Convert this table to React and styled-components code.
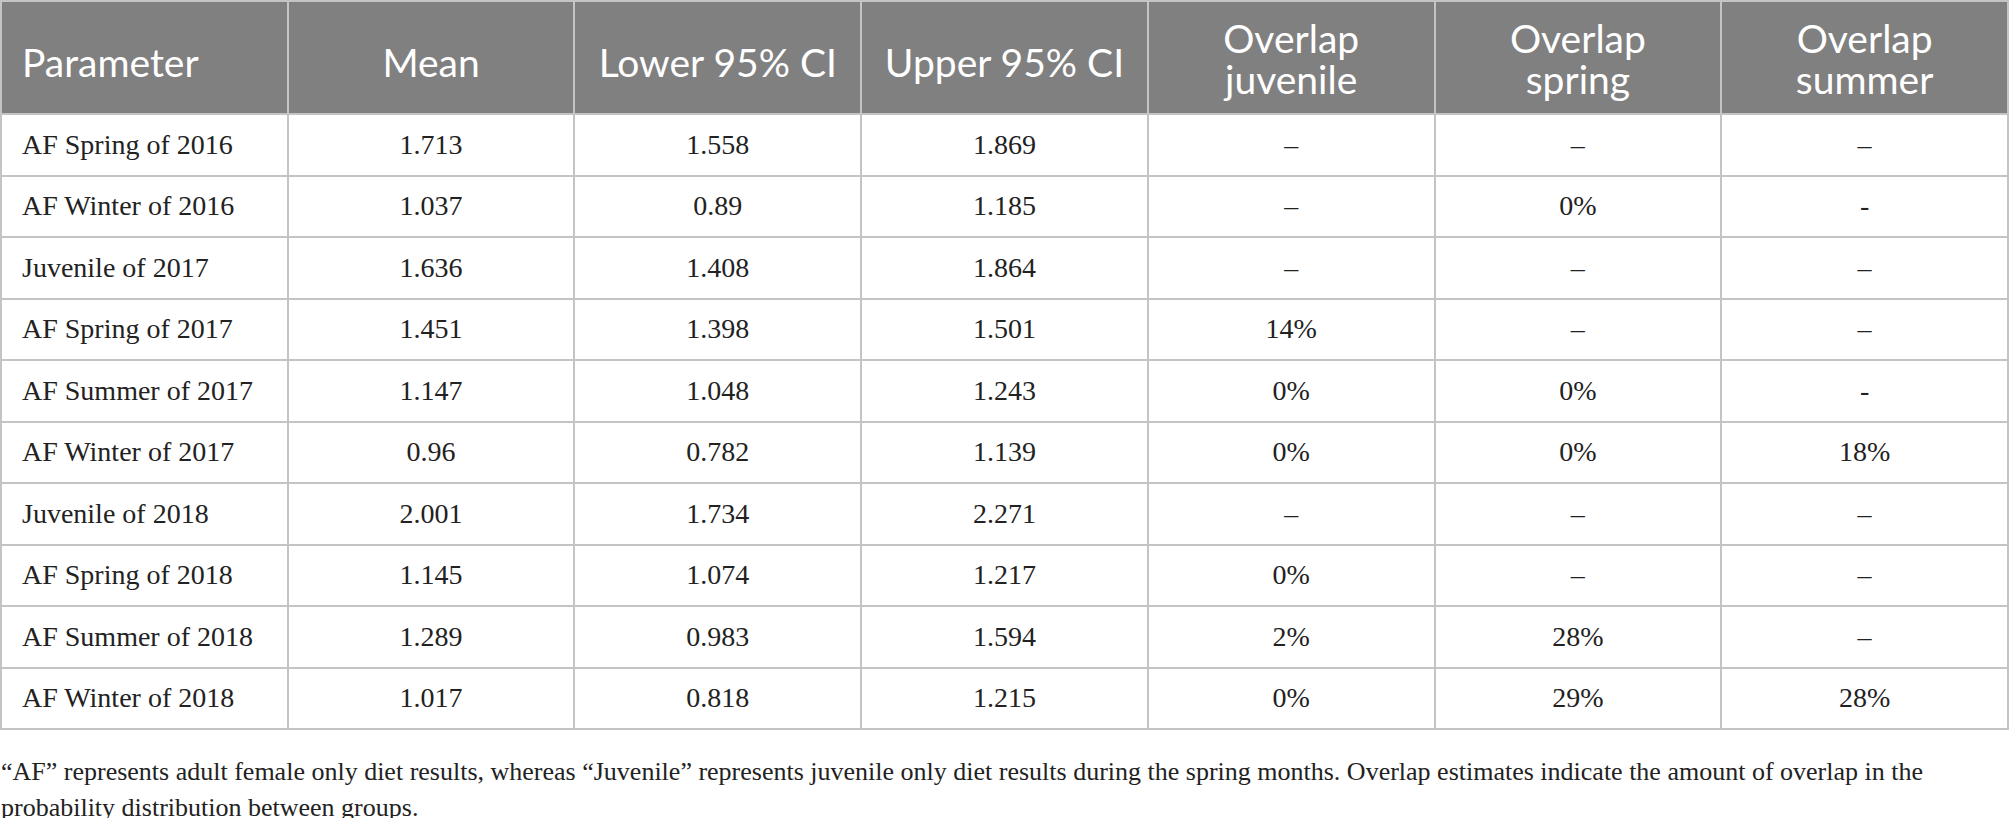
import React from "react";
import styled, { createGlobalStyle } from "styled-components";

const Global = createGlobalStyle`
  html, body { margin: 0; padding: 0; background: #ffffff; }
  body { font-family: "Liberation Serif", "Times New Roman", serif; }
`;

const Page = styled.div`
  width: 2009px;
`;

const Table = styled.table`
  width: 2009px;
  table-layout: fixed;
  border-collapse: separate;
  border-spacing: 0;
  border-top: 2px solid #c4c4c4;
  border-left: 2px solid #c4c4c4;
`;

const HeadCell = styled.th`
  box-sizing: border-box;
  height: 113px;
  background: #808080;
  color: #ffffff;
  font-family: Lato, "Open Sans", sans-serif;
  font-weight: 400;
  font-size: 39px;
  line-height: 41px;
  text-align: ${(p) => (p.$left ? "left" : "center")};
  padding-top: ${(p) => (p.$multi ? "2px" : "10px")};
  padding-bottom: 0;
  padding-right: 0;
  padding-left: ${(p) => (p.$left ? "20px" : "0")};
  border-right: 2px solid #c4c4c4;
  border-bottom: 2px solid #c4c4c4;
  vertical-align: middle;
`;

const Cell = styled.td`
  box-sizing: border-box;
  height: 61.5px;
  color: #222222;
  font-family: "Liberation Serif", "Times New Roman", serif;
  font-size: 28px;
  line-height: 32px;
  text-align: ${(p) => (p.$left ? "left" : "center")};
  padding: 0 0 0 ${(p) => (p.$left ? "20px" : "0")};
  border-right: 2px solid #c4c4c4;
  border-bottom: 2px solid #c4c4c4;
  vertical-align: middle;
`;

const Note = styled.p`
  margin: 24px 0 0 0;
  padding: 0 0 0 1px;
  color: #222222;
  font-family: "Liberation Serif", "Times New Roman", serif;
  font-size: 26px;
  line-height: 36px;
`;

const headers = [
  ["Parameter"],
  ["Mean"],
  ["Lower 95% CI"],
  ["Upper 95% CI"],
  ["Overlap", "juvenile"],
  ["Overlap", "spring"],
  ["Overlap", "summer"],
];

const rows = [
  ["AF Spring of 2016", "1.713", "1.558", "1.869", "–", "–", "–"],
  ["AF Winter of 2016", "1.037", "0.89", "1.185", "–", "0%", "-"],
  ["Juvenile of 2017", "1.636", "1.408", "1.864", "–", "–", "–"],
  ["AF Spring of 2017", "1.451", "1.398", "1.501", "14%", "–", "–"],
  ["AF Summer of 2017", "1.147", "1.048", "1.243", "0%", "0%", "-"],
  ["AF Winter of 2017", "0.96", "0.782", "1.139", "0%", "0%", "18%"],
  ["Juvenile of 2018", "2.001", "1.734", "2.271", "–", "–", "–"],
  ["AF Spring of 2018", "1.145", "1.074", "1.217", "0%", "–", "–"],
  ["AF Summer of 2018", "1.289", "0.983", "1.594", "2%", "28%", "–"],
  ["AF Winter of 2018", "1.017", "0.818", "1.215", "0%", "29%", "28%"],
];

export default function App() {
  return (
    <Page>
      <Global />
      <Table>
        <thead>
          <tr>
            {headers.map((h, i) => (
              <HeadCell key={i} $left={i === 0} $multi={h.length > 1}>
                {h.map((line, j) => (
                  <React.Fragment key={j}>
                    {j > 0 && <br />}
                    {line}
                  </React.Fragment>
                ))}
              </HeadCell>
            ))}
          </tr>
        </thead>
        <tbody>
          {rows.map((r, i) => (
            <tr key={i}>
              {r.map((c, j) => (
                <Cell key={j} $left={j === 0}>
                  {c}
                </Cell>
              ))}
            </tr>
          ))}
        </tbody>
      </Table>
      <Note>
        “AF” represents adult female only diet results, whereas “Juvenile”
        represents juvenile only diet results during the spring months. Overlap
        estimates indicate the amount of overlap in the probability
        distribution between groups.
      </Note>
    </Page>
  );
}
